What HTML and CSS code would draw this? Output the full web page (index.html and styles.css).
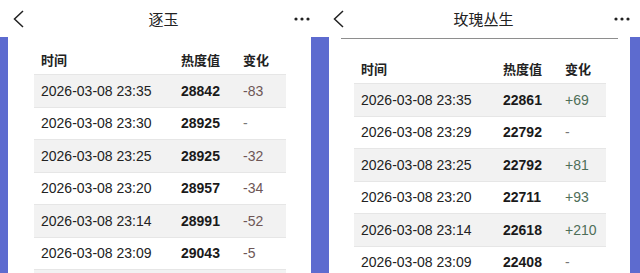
FILE: index.html
```html
<!DOCTYPE html>
<html lang="zh">
<head>
<meta charset="utf-8">
<link rel="stylesheet" href="styles.css">
</head>
<body>
<div class="screen">
  <section class="panel panel-left">
    <header class="topbar">
      <svg class="back" width="12" height="18" viewBox="0 0 12 18"><polyline points="10,1 1.5,9 10,17" fill="none" stroke="#222" stroke-width="1.5"/></svg>
      <div class="title">逐玉</div>
      <svg class="more" width="16" height="4" viewBox="0 0 16 4"><circle cx="2" cy="2" r="1.6" fill="#222"/><circle cx="8" cy="2" r="1.6" fill="#222"/><circle cx="14" cy="2" r="1.6" fill="#222"/></svg>
    </header>
    <div class="stage">
      <div class="card">
        <div class="table">
          <div class="row head"><span>时间</span><span>热度值</span><span>变化</span></div>
          <div class="row alt"><span>2026-03-08 23:35</span><b>28842</b><span class="neg">-83</span></div>
          <div class="row"><span>2026-03-08 23:30</span><b>28925</b><span class="none">-</span></div>
          <div class="row alt"><span>2026-03-08 23:25</span><b>28925</b><span class="neg">-32</span></div>
          <div class="row"><span>2026-03-08 23:20</span><b>28957</b><span class="neg">-34</span></div>
          <div class="row alt"><span>2026-03-08 23:14</span><b>28991</b><span class="neg">-52</span></div>
          <div class="row"><span>2026-03-08 23:09</span><b>29043</b><span class="neg">-5</span></div>
          <div class="row alt"></div>
        </div>
      </div>
    </div>
  </section>
  <section class="panel panel-right">
    <header class="topbar">
      <svg class="back" width="12" height="18" viewBox="0 0 12 18"><polyline points="10,1 1.5,9 10,17" fill="none" stroke="#222" stroke-width="1.5"/></svg>
      <div class="title">玫瑰丛生</div>
      <svg class="more" width="16" height="4" viewBox="0 0 16 4"><circle cx="2" cy="2" r="1.6" fill="#222"/><circle cx="8" cy="2" r="1.6" fill="#222"/><circle cx="14" cy="2" r="1.6" fill="#222"/></svg>
    </header>
    <div class="stage">
      <div class="card">
        <div class="rule"></div>
        <div class="table">
          <div class="row head"><span>时间</span><span>热度值</span><span>变化</span></div>
          <div class="row alt"><span>2026-03-08 23:35</span><b>22861</b><span class="pos">+69</span></div>
          <div class="row"><span>2026-03-08 23:29</span><b>22792</b><span class="none">-</span></div>
          <div class="row alt"><span>2026-03-08 23:25</span><b>22792</b><span class="pos">+81</span></div>
          <div class="row"><span>2026-03-08 23:20</span><b>22711</b><span class="pos">+93</span></div>
          <div class="row alt"><span>2026-03-08 23:14</span><b>22618</b><span class="pos">+210</span></div>
          <div class="row"><span>2026-03-08 23:09</span><b>22408</b><span class="none">-</span></div>
        </div>
      </div>
    </div>
  </section>
</div>
</body>
</html>
```

FILE: styles.css
```css
html, body {
  margin: 0;
  padding: 0;
  background: #ffffff;
}
body {
  font-family: "Liberation Sans", "Noto Sans CJK SC", sans-serif;
  color: #222;
}
.screen {
  display: flex;
  width: 640px;
  height: 273px;
  overflow: hidden;
}
.panel {
  width: 320px;
  display: flex;
  flex-direction: column;
}
.topbar {
  height: 37px;
  flex: none;
  display: grid;
  grid-template-columns: 40px 1fr 40px;
  align-items: center;
  background: #fff;
  padding: 0 10px 0 13px;
}
.back {
  display: block;
}
.more {
  justify-self: end;
  display: block;
}
.title {
  text-align: center;
  font-family: "Noto Sans CJK SC", sans-serif;
  font-size: 15px;
  color: #222;
  padding-left: 4px;
}
.stage {
  flex: 1;
  background: #5d6bcf;
  display: flex;
  min-height: 0;
}
.panel-left .stage {
  padding: 0 9px 0 8px;
}
.panel-right .stage {
  padding: 0 10px 0 9px;
}
.card {
  flex: 1;
  background: #fff;
  overflow: hidden;
}
.panel-left .card {
  padding: 7px 25px 0 26px;
}
.panel-right .card {
  padding: 1px 0 0;
}
.rule {
  height: 1px;
  background: #8e8e8e;
  margin: 0 12px;
}
.panel-right .table {
  margin: 14px 24px 0 25px;
}
.row {
  display: grid;
  grid-template-columns: 140px 62px 1fr;
  height: 32.5px;
  box-sizing: border-box;
  align-items: center;
  border-top: 1px solid #e6e6e6;
  font-size: 14px;
}
.panel-right .row {
  grid-template-columns: 142px 62px 1fr;
}
.row > * {
  padding-left: 7px;
}
.row.head {
  height: 30px;
  border-top: none;
  font-family: "Noto Sans CJK SC", sans-serif;
  font-weight: 600;
  font-size: 13px;
  color: #222;
}
.row.alt {
  background: #f2f2f2;
}
.row b {
  font-weight: 700;
  color: #1a1a1a;
}
.neg {
  color: #6e5656;
}
.pos {
  color: #4e6e58;
}
.none {
  color: #777;
}
```
